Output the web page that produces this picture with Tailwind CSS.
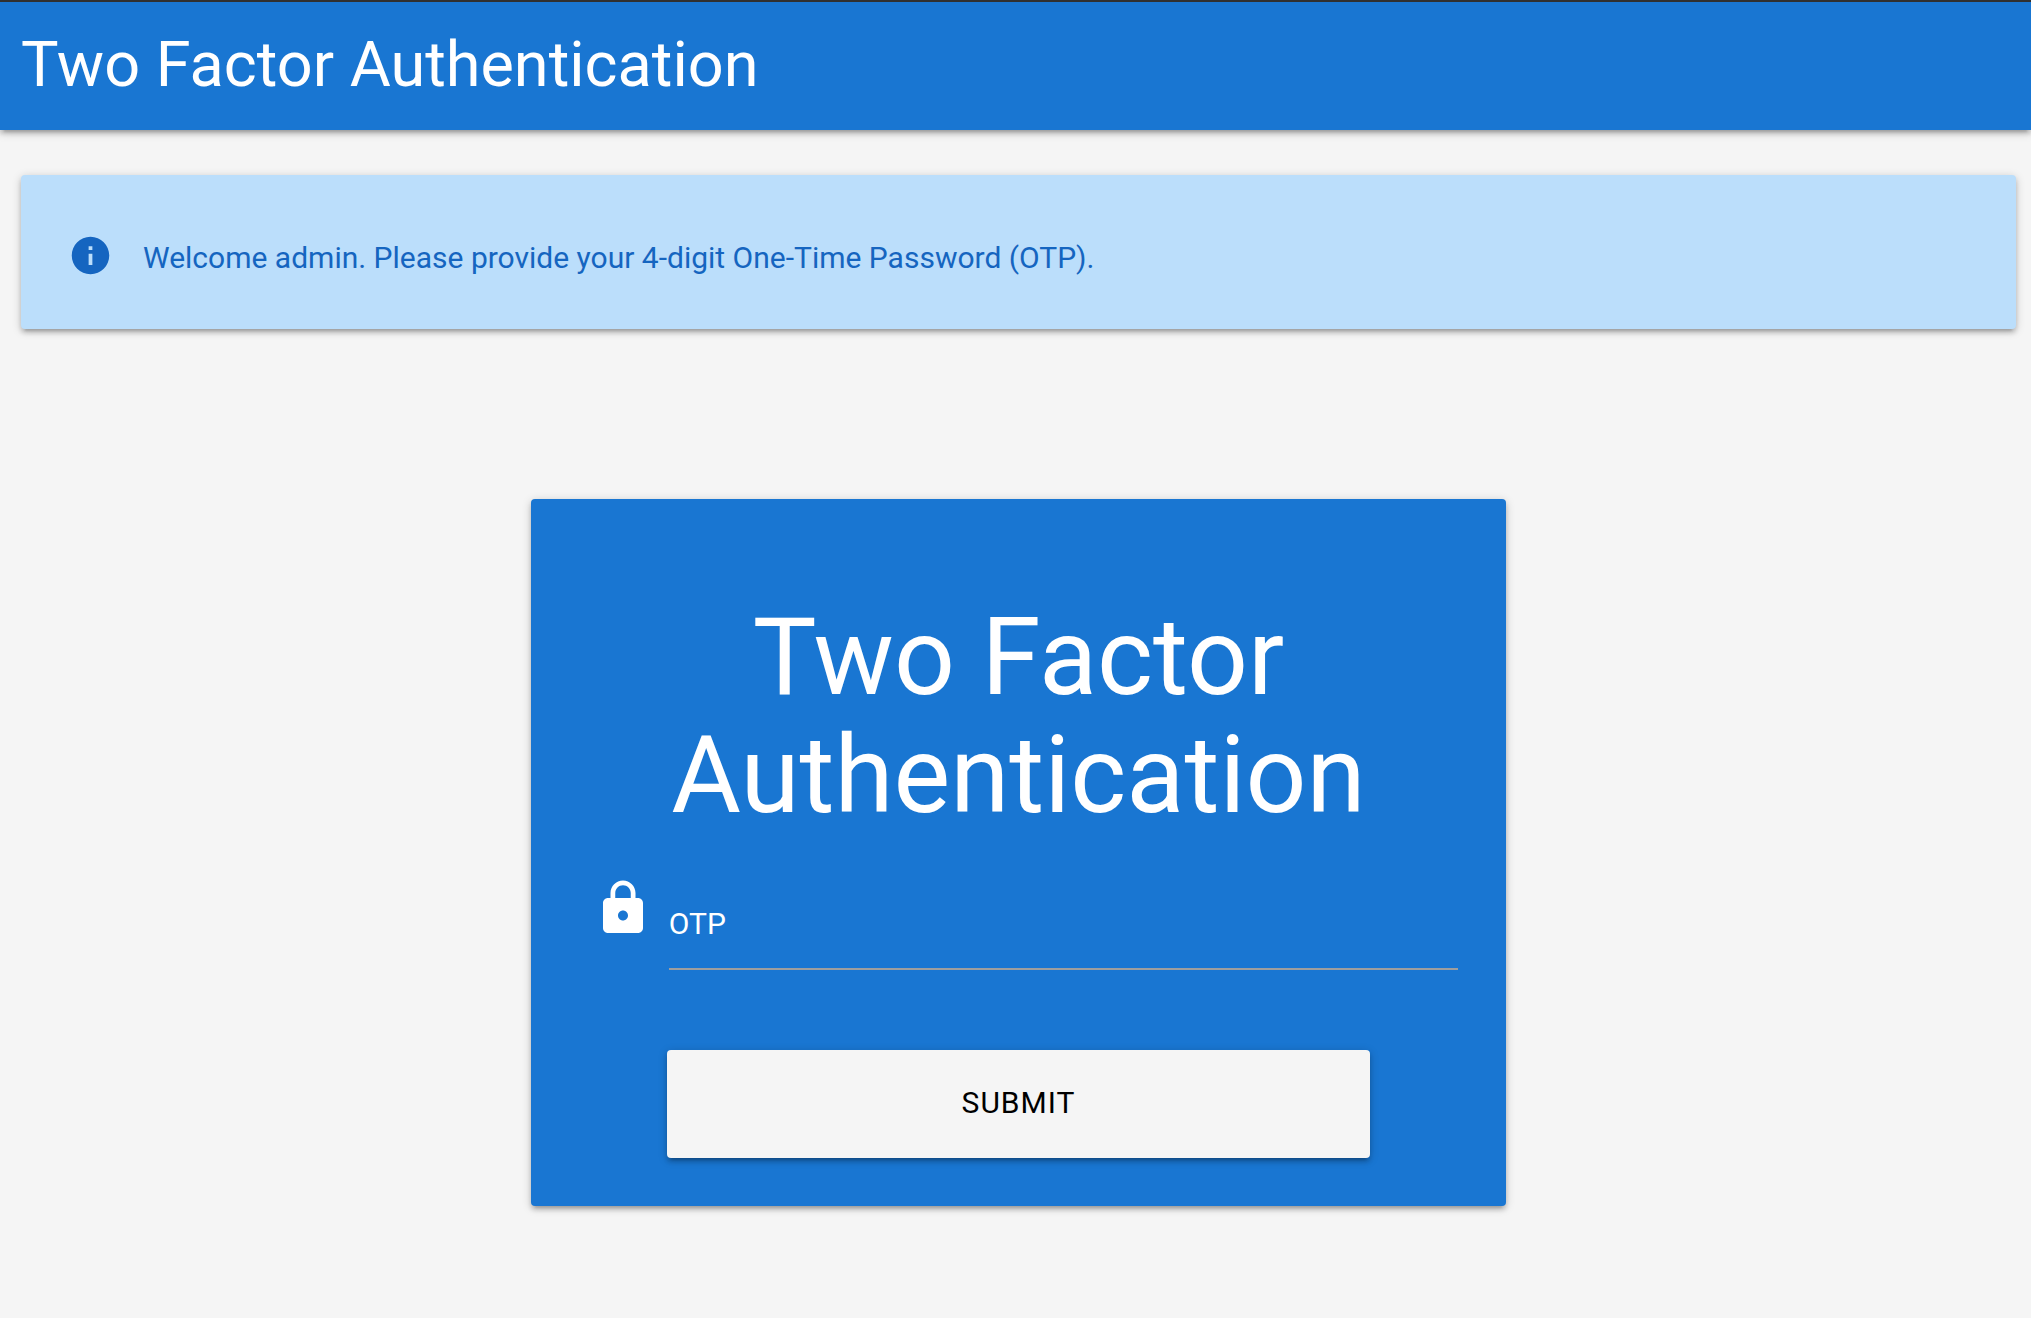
<!DOCTYPE html>
<html lang="en">
<head>
<meta charset="utf-8">
<meta name="viewport" content="width=device-width, initial-scale=1">
<title>Two Factor Authentication</title>
<script src="https://cdn.jsdelivr.net/npm/@tailwindcss/browser@4"></script>
</head>
<body class="min-h-screen bg-[#f5f5f5] font-['Roboto',sans-serif] text-[30px] leading-[45px]">
  <header class="border-t-2 border-[#303030] bg-[#1976d2] px-[21px] shadow-[0_4px_4px_0_rgba(0,0,0,0.14),0_6px_2px_-4px_rgba(0,0,0,0.12),0_2px_10px_0_rgba(0,0,0,0.2)]">
    <h1 class="pb-0.5 text-[63px] leading-[126px] text-white">Two Factor Authentication</h1>
  </header>

  <main class="pt-[45px] pr-[15px] pl-[21px]">
    <div role="status" class="flex items-start gap-[30px] rounded-sm bg-[#bbdefb] px-[47px] pt-[58px] pb-[49px] text-[#1565c0] shadow-[0_4px_4px_0_rgba(0,0,0,0.14),0_6px_2px_-4px_rgba(0,0,0,0.12),0_2px_10px_0_rgba(0,0,0,0.2)]">
      <svg class="size-[45px] shrink-0" viewBox="0 0 24 24" fill="currentColor" aria-hidden="true"><path d="M12 2C6.48 2 2 6.48 2 12s4.48 10 10 10 10-4.48 10-10S17.52 2 12 2zm1 15h-2v-6h2v6zm0-8h-2V7h2v2z"/></svg>
      <p class="pt-0.5">Welcome admin. Please provide your 4-digit One-Time Password (OTP).</p>
    </div>

    <section class="mx-auto mt-[170px] w-[calc(50%-22px)] rounded-sm bg-[#1976d2] p-12 text-white shadow-[0_4px_4px_0_rgba(0,0,0,0.14),0_6px_2px_-4px_rgba(0,0,0,0.12),0_2px_10px_0_rgba(0,0,0,0.2)]">
      <h2 class="pt-[52px] text-center text-[107px] leading-[118px]">Two Factor Authentication</h2>
      <form class="pt-[43px]">
        <div class="flex gap-4 pl-3.5">
          <svg class="size-[60px] shrink-0" viewBox="0 0 24 24" fill="currentColor" aria-hidden="true"><path d="M18 8h-1V6c0-2.76-2.24-5-5-5S7 3.24 7 6v2H6c-1.1 0-2 .9-2 2v10c0 1.1.9 2 2 2h12c1.1 0 2-.9 2-2V10c0-1.1-.9-2-2-2zm-6 9c-1.1 0-2-.9-2-2s.9-2 2-2 2 .9 2 2-.9 2-2 2zm3.1-9H8.9V6c0-1.71 1.39-3.1 3.1-3.1 1.71 0 3.1 1.39 3.1 3.1v2z"/></svg>
          <div class="relative flex-1">
            <input id="otp" name="otp" type="text" inputmode="numeric" maxlength="4" autocomplete="one-time-code" placeholder=" " class="peer block h-[92px] w-full border-b-2 border-[#9e9e9e] bg-transparent outline-none focus:border-white">
            <label for="otp" class="pointer-events-none absolute top-0 left-0 flex h-[90px] items-center peer-focus:hidden peer-[:not(:placeholder-shown)]:hidden">OTP</label>
          </div>
        </div>
        <button type="submit" class="mx-auto mt-20 block h-[108px] w-4/5 cursor-pointer rounded-sm bg-[#f5f5f5] pb-1 tracking-[1px] text-black uppercase shadow-[0_4px_4px_0_rgba(0,0,0,0.14),0_6px_2px_-4px_rgba(0,0,0,0.12),0_2px_10px_0_rgba(0,0,0,0.2)]">Submit</button>
      </form>
    </section>
  </main>
</body>
</html>
